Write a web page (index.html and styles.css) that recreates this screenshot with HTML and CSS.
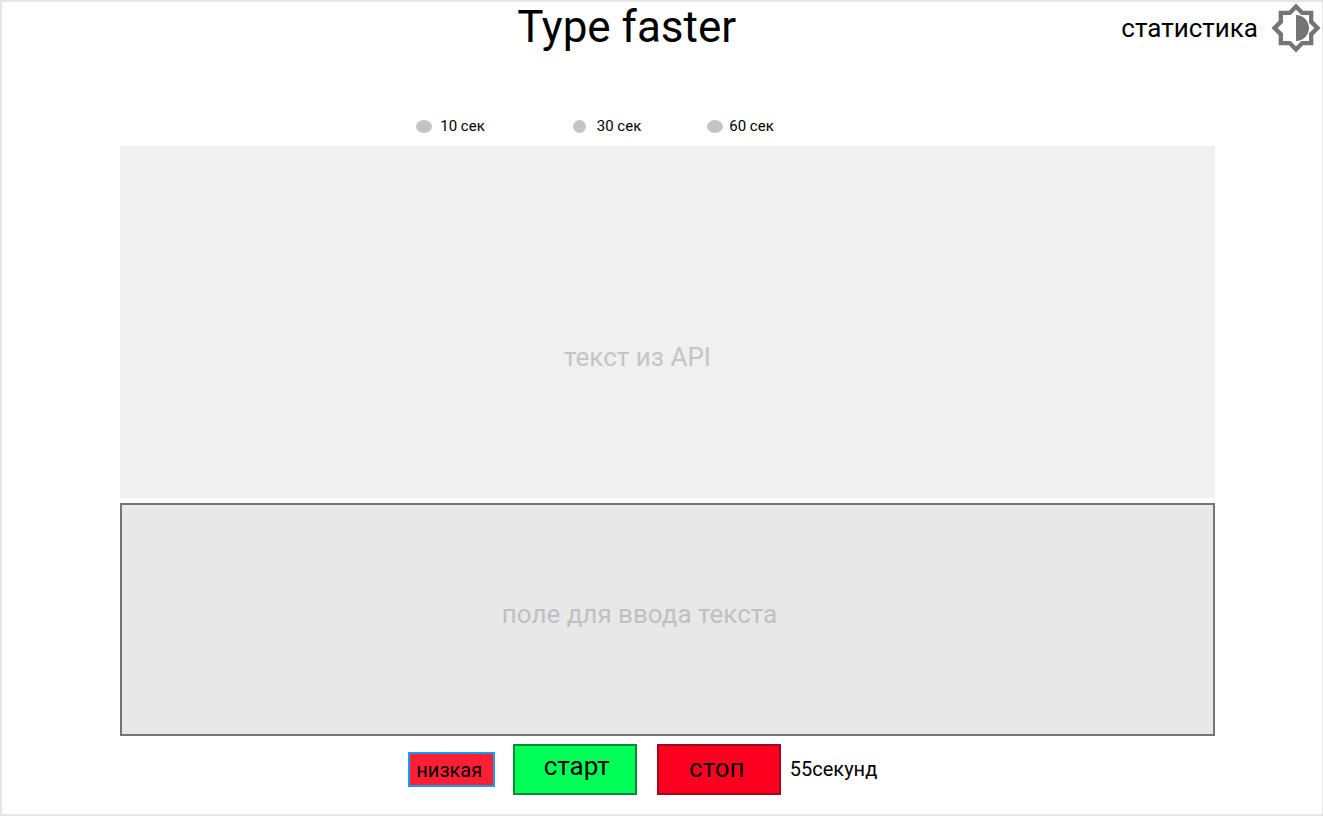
FILE: index.html
```html
<!DOCTYPE html>
<html lang="ru">
<head>
<meta charset="utf-8">
<meta name="viewport" content="width=device-width, initial-scale=1">
<title>Type faster</title>
<link rel="stylesheet" href="styles.css">
</head>
<body class="page">
  <header class="header">
    <h1 class="title">Type faster</h1>
    <a class="stats-link" href="#">статистика</a>
    <button class="theme-button" type="button" aria-label="Сменить тему">
      <svg class="theme-icon" viewBox="0 0 24 24" aria-hidden="true"><path d="M20 8.69V4h-4.69L12 .69 8.69 4H4v4.69L.69 12 4 15.31V20h4.69L12 23.31 15.31 20H20v-4.69L23.31 12 20 8.69zm-2 5.79V18h-3.52L12 20.48 9.52 18H6v-3.52L3.52 12 6 9.52V6h3.52L12 3.52 14.48 6H18v3.52L20.48 12 18 14.48zM12 6v12c3.31 0 6-2.69 6-6s-2.69-6-6-6z"/></svg>
    </button>
  </header>
  <main class="trainer">
    <div class="durations" role="radiogroup" aria-label="Время">
      <label class="duration duration-short"><input class="dot dot-wide" type="radio" name="time" value="10">10 сек</label>
      <label class="duration duration-medium"><input class="dot" type="radio" name="time" value="30">30 сек</label>
      <label class="duration duration-long"><input class="dot dot-wide" type="radio" name="time" value="60">60 сек</label>
    </div>
    <div class="workspace">
      <section class="source-text"><p class="source-label">текст из API</p></section>
      <textarea class="typing-field" aria-label="поле для ввода текста" placeholder="поле для ввода текста"></textarea>
    </div>
    <div class="controls">
      <button class="button level" type="button">низкая</button>
      <button class="button start" type="button">старт</button>
      <button class="button stop" type="button">стоп</button>
      <output class="timer">55секунд</output>
    </div>
  </main>
</body>
</html>
```
FILE: styles.css
```css
* {
  box-sizing: border-box;
}

.page {
  display: flex;
  flex-direction: column;
  min-height: 100vh;
  margin: 0;
  border: 2px solid #e5e5e5;
  border-right-width: 1px;
  background: #fff;
  color: #000;
  font-family: Roboto, "Noto Sans", sans-serif;
}

.header {
  display: flex;
  align-items: center;
}

.title {
  flex: 1;
  margin: 0;
  padding: 0 0 2px 130px;
  font-size: 44px;
  font-weight: 400;
  line-height: 50px;
  text-align: center;
}

.stats-link {
  color: inherit;
  font-size: 26px;
  line-height: 30px;
  text-decoration: none;
}

.theme-button {
  margin: 0 0 0 12px;
  padding: 0;
  border: 0;
  background: none;
}

.theme-icon {
  display: block;
  width: 52px;
  height: 52px;
  fill: #757575;
}

.trainer {
  flex: 1;
  display: flex;
  flex-direction: column;
  padding: 62px 107px 19px 118px;
}

.durations {
  display: flex;
  justify-content: center;
  margin-bottom: 10px;
  padding-right: 145px;
  font-size: 15px;
  line-height: 20px;
}

.duration {
  display: flex;
  align-items: center;
}

.duration-short {
  gap: 8px;
  margin-right: 88px;
}

.duration-medium {
  gap: 11px;
  margin-right: 66px;
}

.duration-long {
  gap: 6px;
}

.dot {
  appearance: none;
  width: 13px;
  height: 13px;
  margin: 0;
  border-radius: 50%;
  background: #c4c4c4;
}

.dot-wide {
  width: 16px;
}

.dot:checked {
  background: #757575;
}

.workspace {
  flex: 1;
  display: grid;
  grid-template-rows: 352fr 233fr;
  gap: 5px;
}

.source-text {
  padding: 196px 60px 0 0;
  background: #f0f0f0;
  color: #c4c4c4;
  font-size: 26px;
  line-height: 30px;
  text-align: center;
}

.source-label {
  margin: 0;
}

.typing-field {
  display: block;
  width: 100%;
  margin: 0;
  padding: 94px 56px 0 0;
  border: 2px solid #757575;
  border-radius: 0;
  background: #e8e8e8;
  color: #000;
  font: inherit;
  font-size: 26px;
  line-height: 30px;
  text-align: center;
  resize: none;
}

.typing-field::placeholder {
  color: #c0c0c0;
  opacity: 1;
}

.controls {
  display: flex;
  justify-content: center;
  align-items: center;
  margin-top: 8px;
  padding-right: 50px;
}

.button {
  width: 124px;
  height: 51px;
  margin: 0 20px 0 0;
  padding: 0;
  border: 2px solid;
  color: #000;
  font: inherit;
  font-size: 26px;
  line-height: 30px;
}

.level {
  width: 87px;
  height: 35px;
  margin-right: 18px;
  padding-right: 4px;
  border-color: #0fa0f5;
  background: #ff1f35;
  font-size: 20px;
}

.start {
  padding: 0 0 8px 4px;
  border-color: #0a8a35;
  background: #00ff57;
}

.stop {
  margin-right: 9px;
  padding: 0 4px 4px 0;
  border-color: #a00a18;
  background: #ff0020;
}

.timer {
  padding-bottom: 2px;
  font-size: 20px;
  line-height: 24px;
}
```
